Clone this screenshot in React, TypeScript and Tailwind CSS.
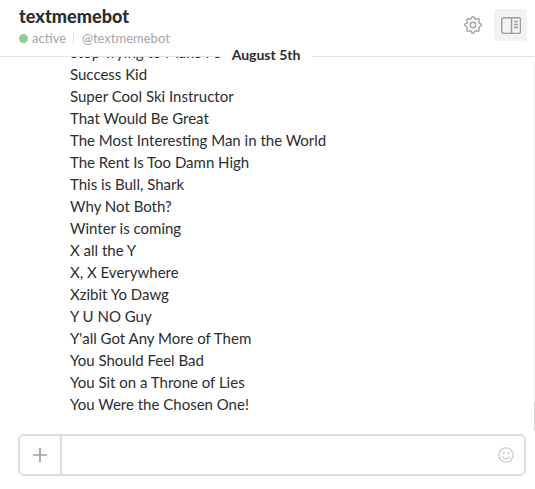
const memes = [
  'Stop Trying to Make Fetch Happen',
  'Success Kid',
  'Super Cool Ski Instructor',
  'That Would Be Great',
  'The Most Interesting Man in the World',
  'The Rent Is Too Damn High',
  'This is Bull, Shark',
  'Why Not Both?',
  'Winter is coming',
  'X all the Y',
  'X, X Everywhere',
  'Xzibit Yo Dawg',
  'Y U NO Guy',
  "Y'all Got Any More of Them",
  'You Should Feel Bad',
  'You Sit on a Throne of Lies',
  'You Were the Chosen One!',
];

// Eight rounded teeth around the hub.
const gearPoints = Array.from({ length: 96 }, (_, i) => {
  const a = (i / 96) * Math.PI * 2;
  const wave = Math.tanh(1.6 * Math.cos(8 * a));
  const r = 7.3 + 1 * wave;
  return `${(10 + r * Math.cos(a)).toFixed(2)},${(10 + r * Math.sin(a)).toFixed(2)}`;
}).join(' ');

function GearIcon() {
  return (
    <svg width="20" height="20" viewBox="0 0 20 20" fill="none" stroke="#a3a3ab" strokeWidth="1.4" strokeLinejoin="round">
      <polygon points={gearPoints} />
      <circle cx="10" cy="10" r="2.7" />
    </svg>
  );
}

function PanelIcon() {
  return (
    <svg width="20" height="17" viewBox="0 0 20 17" fill="none" stroke="#9b9ba3" strokeWidth="1.4">
      <rect x="0.7" y="0.8" width="18.8" height="15.6" rx="2" />
      <path d="M10.5 1v15M13.2 4.5h3.8M13.2 7.5h3.8M13.2 10.5h3.8" />
    </svg>
  );
}

function SmileIcon() {
  return (
    <svg width="16" height="16" viewBox="0 0 16 16" fill="none" stroke="#c9c9cb" strokeWidth="1.2" strokeLinecap="round">
      <circle cx="8" cy="8" r="7.1" />
      <path d="M4.7 9.7c.7 1.4 1.9 2 3.3 2s2.6-.6 3.3-2" />
      <circle cx="5.6" cy="6" r="0.7" fill="#c9c9cb" strokeWidth="0.7" />
      <circle cx="10.4" cy="6" r="0.7" fill="#c9c9cb" strokeWidth="0.7" />
    </svg>
  );
}

export default function App() {
  return (
    <div className="relative flex h-[489px] w-[535px] flex-col overflow-hidden bg-white font-['Lato',sans-serif] text-[#2c2d30]">
      <header className="flex h-[57px] shrink-0 justify-between border-b border-[#e3e3e4] pr-2 pl-[18px]">
        <div className="pt-[5px]">
          <h1 className="pl-px text-[18px] leading-[22px] font-black tracking-[0.05px]">textmemebot</h1>
          <div className="flex items-center pt-[2px] text-[13px] leading-[18px] text-[#a5a5aa]">
            <span className="mr-1 ml-[1px] size-[9px] rounded-full bg-[#92cb95]" />
            <span>active</span>
            <span className="mr-2 ml-[7px] h-3 w-px bg-[#e6e6e7]" />
            <span>@textmemebot</span>
          </div>
        </div>
        <div className="flex items-start gap-[11px] pt-[9px]">
          <button className="flex h-8 w-5 items-center justify-center" aria-label="Settings">
            <GearIcon />
          </button>
          <button className="flex h-8 w-[33px] items-center justify-center rounded-[4px] bg-[#f2f2f3]" aria-label="Details">
            <PanelIcon />
          </button>
        </div>
      </header>

      <main className="flex h-[374px] shrink-0 justify-between overflow-hidden">
        <ul className="-mt-4 pl-[70px] text-[15px] leading-[22px]">
          {memes.map((name) => (
            <li key={name}>{name}</li>
          ))}
        </ul>
        <div className="mt-1.5 flex h-[367px] w-px flex-col justify-end bg-[#ededee]">
          <div className="h-7 bg-[#d5d5d7]" />
        </div>
      </main>

      <div className="absolute top-[45px] left-[222px] flex h-[22px] w-[90px] justify-center bg-white pr-[2px] text-[14px] leading-[20px] font-bold whitespace-nowrap">
        August 5th
      </div>

      <footer className="pr-[9px] pl-[18px] pt-[3px]">
        <div className="flex h-[42px] items-stretch rounded-[6px] border-2 border-[#dededf]">
          <button className="flex w-[42px] items-center justify-center border-r-2 border-[#dededf]" aria-label="Add">
            <svg width="14" height="14" viewBox="0 0 14 14" stroke="#a0a0a2" strokeWidth="1.7">
              <path d="M7 0v14M0 7h14" />
            </svg>
          </button>
          <div className="flex flex-1 items-center justify-end pr-2.5">
            <SmileIcon />
          </div>
        </div>
      </footer>
    </div>
  );
}
